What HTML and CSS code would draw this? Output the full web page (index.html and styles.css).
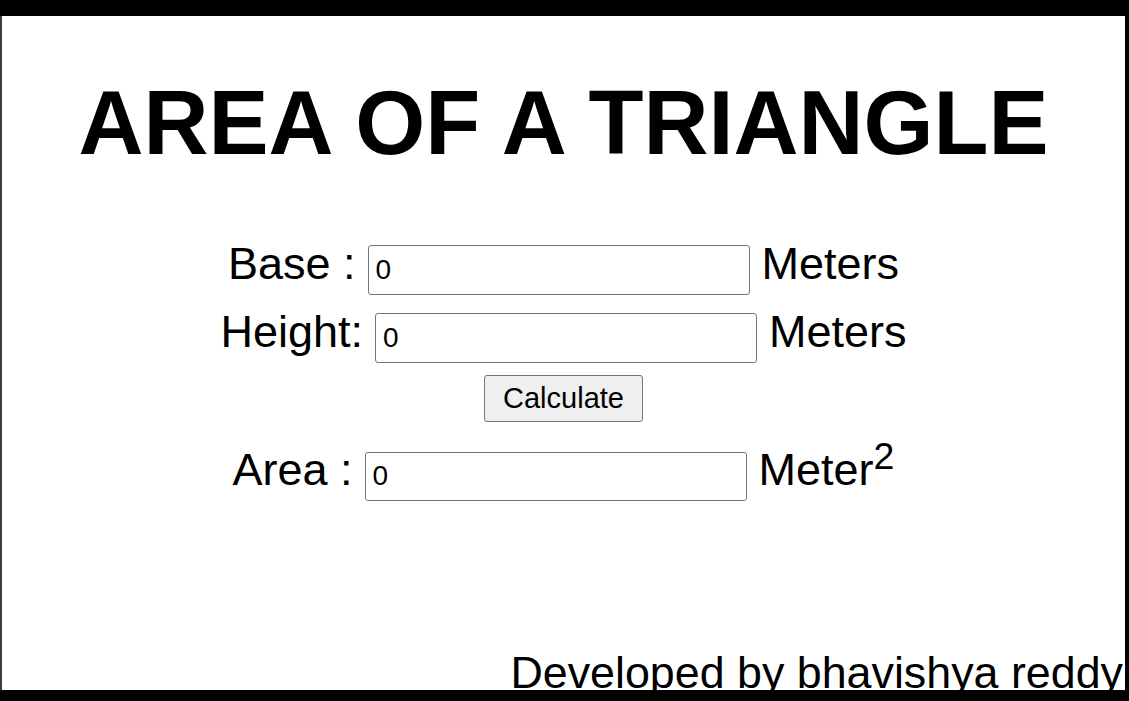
FILE: index.html
```html
<!DOCTYPE html>
<html lang="en">
<head>
<meta charset="utf-8">
<title>Area of a Triangle</title>
<link rel="stylesheet" href="styles.css">
</head>
<body>
<div class="page">
  <h1 class="title">AREA OF A TRIANGLE</h1>
  <div class="row row-base">
    <span class="label">Base :</span>
    <input class="field" type="text" value="0">
    <span class="unit">Meters</span>
  </div>
  <div class="row row-height">
    <span class="label">Height:</span>
    <input class="field" type="text" value="0">
    <span class="unit">Meters</span>
  </div>
  <div class="row row-button">
    <button class="calc" type="button">Calculate</button>
  </div>
  <div class="row row-area">
    <span class="label">Area :</span>
    <input class="field field-area" type="text" value="0">
    <span class="unit">Meter<sup class="sq">2</sup></span>
  </div>
  <div class="footer">Developed by bhavishya reddy</div>
</div>
</body>
</html>
```
FILE: styles.css
```css
html {
  background: #000;
}
body {
  margin: 0;
  padding: 16px 4px 11px 0;
  font-family: "Liberation Sans", Arial, sans-serif;
  color: #000;
}
.page {
  box-sizing: border-box;
  height: 674px;
  background: #fff;
  border-left: 2px solid #3c3c3c;
  overflow: hidden;
  display: flex;
  flex-direction: column;
}
.title {
  margin: 56px 0 0;
  font-size: 90px;
  font-weight: bold;
  text-align: center;
  line-height: normal;
}
.row {
  display: flex;
  justify-content: center;
  align-items: baseline;
  gap: 12px;
  font-size: 45px;
}
.row-base {
  margin-top: 63px;
}
.row-height {
  margin-top: 11px;
}
.row-button {
  margin-top: 12px;
  align-items: center;
}
.row-area {
  margin-top: 22px;
}
.field {
  box-sizing: border-box;
  width: 382px;
  height: 50px;
  margin: 0;
  padding: 0 7px;
  border: 1px solid #767676;
  border-radius: 3px;
  background: #fff;
  font-family: "Liberation Sans", Arial, sans-serif;
  font-size: 28px;
  color: #000;
}
.field-area {
  height: 49px;
}
.calc {
  box-sizing: border-box;
  width: 159px;
  height: 47px;
  margin: 0;
  padding: 0;
  border: 1px solid #767676;
  border-radius: 3px;
  background: #efefef;
  font-family: "Liberation Sans", Arial, sans-serif;
  font-size: 29px;
  color: #000;
}
.sq {
  font-size: smaller;
  line-height: 0;
}
.footer {
  margin-top: auto;
  margin-bottom: -8px;
  padding-right: 2px;
  text-align: right;
  font-size: 44.8px;
  line-height: normal;
}
```
